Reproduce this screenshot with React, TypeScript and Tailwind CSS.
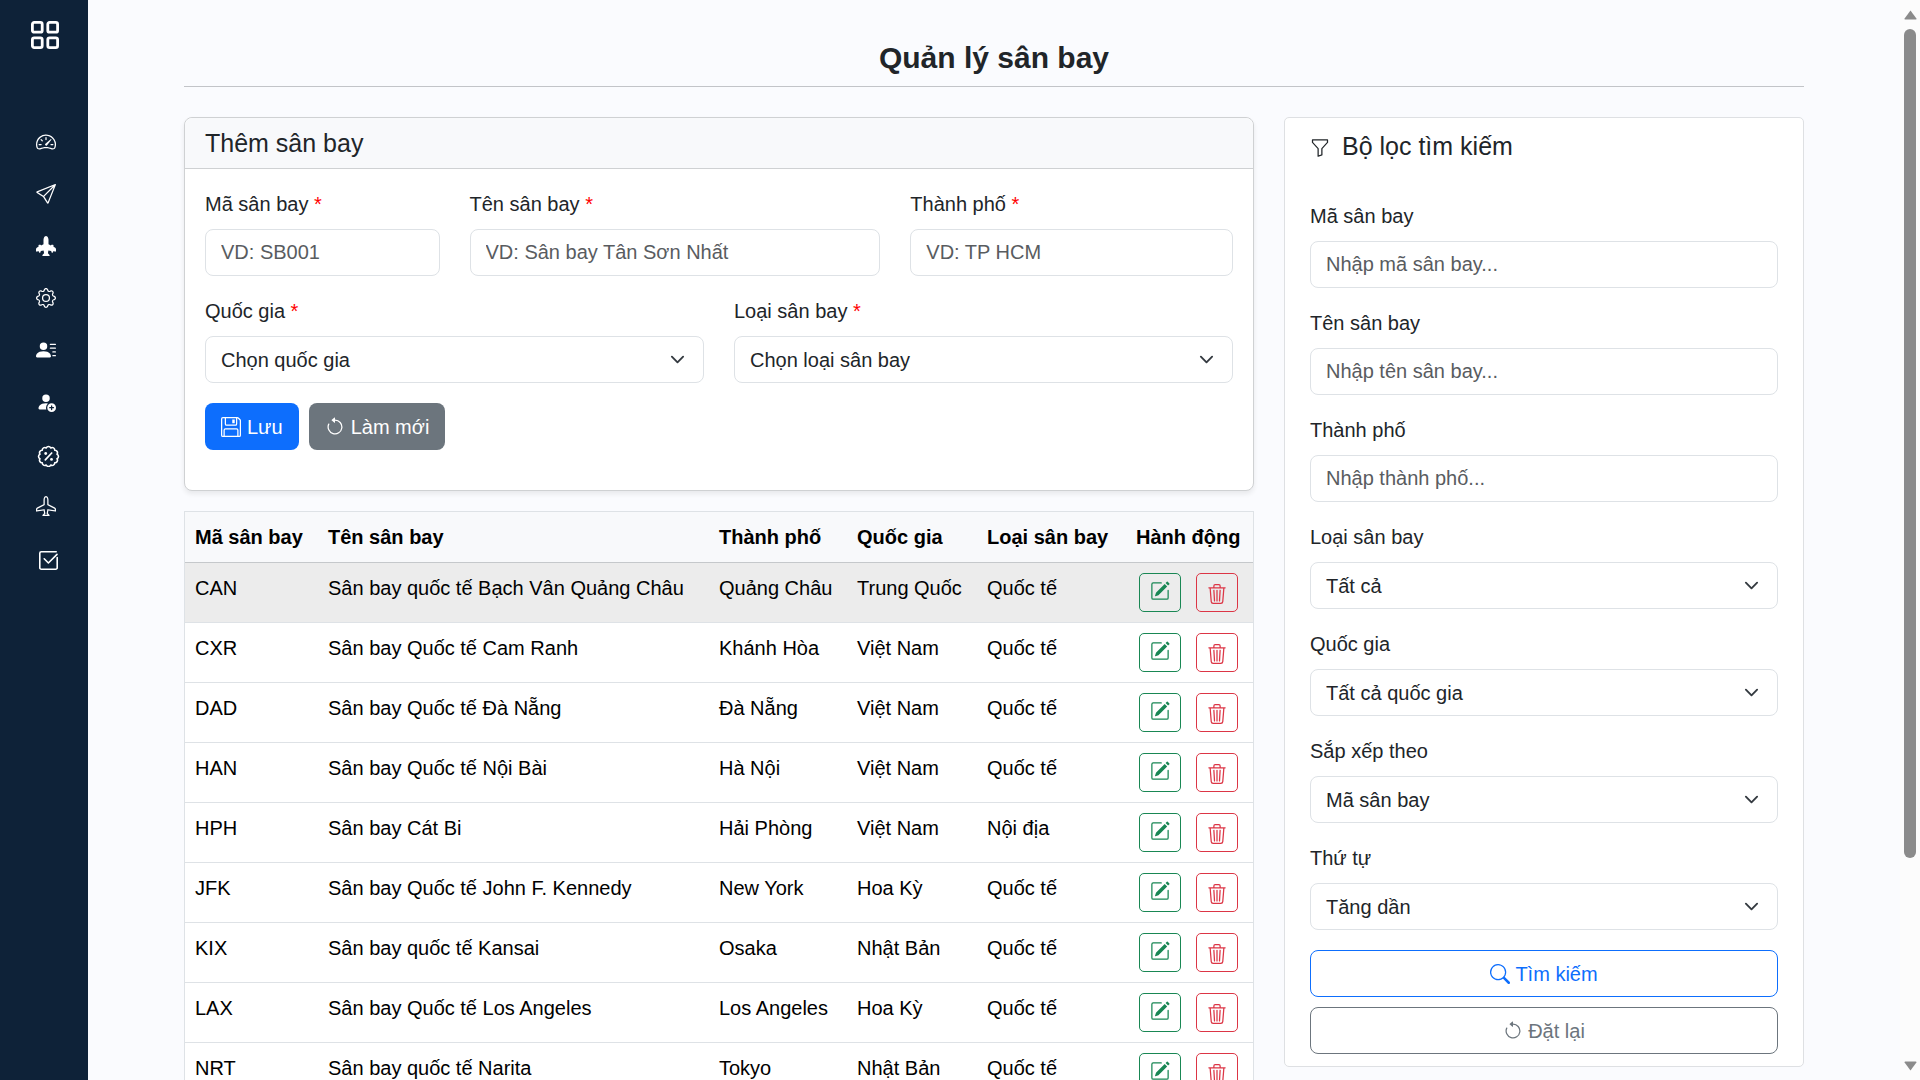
import type { ReactNode } from "react";
import type { IconType } from "react-icons";
import {
  BsAirplane,
  BsAirplaneEnginesFill,
  BsArrowCounterclockwise,
  BsFloppy,
  BsFunnel,
  BsGear,
  BsPencilSquare,
  BsPersonFillAdd,
  BsPersonLinesFill,
  BsSearch,
  BsSend,
  BsSpeedometer2,
  BsTrash3,
} from "react-icons/bs";

type Airport = { code: string; name: string; city: string; country: string; kind: string };

const airports: Airport[] = [
  { code: "CAN", name: "Sân bay quốc tế Bạch Vân Quảng Châu", city: "Quảng Châu", country: "Trung Quốc", kind: "Quốc tế" },
  { code: "CXR", name: "Sân bay Quốc tế Cam Ranh", city: "Khánh Hòa", country: "Việt Nam", kind: "Quốc tế" },
  { code: "DAD", name: "Sân bay Quốc tế Đà Nẵng", city: "Đà Nẵng", country: "Việt Nam", kind: "Quốc tế" },
  { code: "HAN", name: "Sân bay Quốc tế Nội Bài", city: "Hà Nội", country: "Việt Nam", kind: "Quốc tế" },
  { code: "HPH", name: "Sân bay Cát Bi", city: "Hải Phòng", country: "Việt Nam", kind: "Nội địa" },
  { code: "JFK", name: "Sân bay Quốc tế John F. Kennedy", city: "New York", country: "Hoa Kỳ", kind: "Quốc tế" },
  { code: "KIX", name: "Sân bay quốc tế Kansai", city: "Osaka", country: "Nhật Bản", kind: "Quốc tế" },
  { code: "LAX", name: "Sân bay Quốc tế Los Angeles", city: "Los Angeles", country: "Hoa Kỳ", kind: "Quốc tế" },
  { code: "NRT", name: "Sân bay quốc tế Narita", city: "Tokyo", country: "Nhật Bản", kind: "Quốc tế" },
];

const controlClass =
  "h-[47px] w-full rounded-lg border border-[#dee2e6] bg-white px-[15px] text-[20px] leading-[30px] text-[#212529] placeholder:text-[#595c5f] placeholder:opacity-100";

function GridIcon() {
  return (
    <svg viewBox="0 0 28 28" className="size-7" fill="none" stroke="currentColor" strokeWidth="2.8" aria-hidden="true">
      <rect x="1.4" y="1.4" width="9.8" height="9.8" rx="1.8" />
      <rect x="16.8" y="1.4" width="9.8" height="9.8" rx="1.8" />
      <rect x="1.4" y="16.8" width="9.8" height="9.8" rx="1.8" />
      <rect x="16.8" y="16.8" width="9.8" height="9.8" rx="1.8" />
    </svg>
  );
}

/* Scalloped badge outline: twelve small outward arcs around the centre. */
const scallops = Array.from({ length: 12 }, (_, i) => {
  const a = ((i + 0.5) * Math.PI) / 6;
  return `${(12.5 + 8.8 * Math.cos(a)).toFixed(2)} ${(15.5 + 8.8 * Math.sin(a)).toFixed(2)}`;
});
const badgePath = `M${scallops[11]} ${scallops.map((p) => `A2.5 2.5 0 0 1 ${p}`).join(" ")}Z`;

function DiscountIcon() {
  return (
    <svg viewBox="0 0 26 26" className="size-[26px]" fill="none" stroke="currentColor" strokeWidth="1.6" strokeLinecap="round" aria-hidden="true">
      <path d={badgePath} strokeLinejoin="round" />
      <path d="M9.3 18.8l6.4-6.8" strokeWidth="1.7" />
      <circle cx="9.7" cy="12.5" r="1.4" fill="currentColor" stroke="none" />
      <circle cx="15.5" cy="18.4" r="1.4" fill="currentColor" stroke="none" />
    </svg>
  );
}

function CheckIcon() {
  return (
    <svg viewBox="0 0 26 26" className="size-[26px]" fill="none" stroke="currentColor" strokeWidth="1.6" strokeLinecap="round" strokeLinejoin="round" aria-hidden="true">
      <path d="M20.2 6.8H5.3a1.5 1.5 0 0 0-1.5 1.5v14.4a1.5 1.5 0 0 0 1.5 1.5h14.4a1.5 1.5 0 0 0 1.5-1.5V12.5" />
      <path d="M8.2 13.8l4.2 4.2 8.6-8.6" />
    </svg>
  );
}

function Mini(Icon: IconType) {
  return <Icon className="size-5" aria-hidden="true" />;
}

const navItems: { label: string; icon: ReactNode }[] = [
  { label: "Bảng điều khiển", icon: Mini(BsSpeedometer2) },
  { label: "Chuyến bay", icon: Mini(BsSend) },
  { label: "Máy bay", icon: Mini(BsAirplaneEnginesFill) },
  { label: "Cài đặt", icon: Mini(BsGear) },
  { label: "Khách hàng", icon: Mini(BsPersonLinesFill) },
  { label: "Nhân viên", icon: Mini(BsPersonFillAdd) },
  { label: "Khuyến mãi", icon: <DiscountIcon /> },
  { label: "Sân bay", icon: Mini(BsAirplane) },
  { label: "Đặt vé", icon: <CheckIcon /> },
];

function Sidebar() {
  return (
    <aside className="flex w-[88px] shrink-0 flex-col bg-[#0e2238] text-white">
      <button type="button" aria-label="Menu" className="mt-[21px] ml-[31px] self-start">
        <GridIcon />
      </button>
      <nav className="mt-[67px] flex flex-col">
        {navItems.map((item) => (
          <a key={item.label} href="#" aria-label={item.label} className="flex h-[52px] items-center pl-9">
            {item.icon}
          </a>
        ))}
      </nav>
    </aside>
  );
}

function Field({ id, label, required, className = "", children }: { id: string; label: string; required?: boolean; className?: string; children: ReactNode }) {
  return (
    <div className={className}>
      <label htmlFor={id} className="mb-[10px] block">
        {label}
        {required && <span className="text-[#ff0000]"> *</span>}
      </label>
      {children}
    </div>
  );
}

function Select({ id, option }: { id: string; option: string }) {
  return (
    <div className="relative">
      <select id={id} className={`${controlClass} appearance-none`}>
        <option>{option}</option>
      </select>
      <svg viewBox="0 0 16 16" className="pointer-events-none absolute top-4 right-[19px] size-[15px]" fill="none" stroke="#343a40" strokeWidth="2" strokeLinecap="round" strokeLinejoin="round" aria-hidden="true">
        <path d="m2 5 6 6 6-6" />
      </svg>
    </div>
  );
}

function AddForm() {
  return (
    <form className="rounded-lg border border-[#cfd1d3] bg-white shadow-[0_3px_5px_rgba(0,0,0,0.075)]">
      <div className="rounded-t-lg border-b border-[#cfd1d3] bg-[#f8f9fb] px-5 py-[10px]">
        <h2 className="text-[25px] leading-[30px]">Thêm sân bay</h2>
      </div>
      <div className="p-5">
        <div className="grid grid-cols-12 gap-x-[30px] gap-y-5">
          <Field id="ma" label="Mã sân bay" required className="col-span-3">
            <input id="ma" placeholder="VD: SB001" className={controlClass} />
          </Field>
          <Field id="ten" label="Tên sân bay" required className="col-span-5">
            <input id="ten" placeholder="VD: Sân bay Tân Sơn Nhất" className={controlClass} />
          </Field>
          <Field id="tp" label="Thành phố" required className="col-span-4">
            <input id="tp" placeholder="VD: TP HCM" className={controlClass} />
          </Field>
          <Field id="qg" label="Quốc gia" required className="col-span-6">
            <Select id="qg" option="Chọn quốc gia" />
          </Field>
          <Field id="loai" label="Loại sân bay" required className="col-span-6">
            <Select id="loai" option="Chọn loại sân bay" />
          </Field>
        </div>
        <div className="my-5 flex gap-[10px] text-white">
          <button type="button" className="flex h-[47px] items-center gap-[6px] rounded-lg bg-[#0d6efd] px-4">
            <BsFloppy className="size-5" />
            Lưu
          </button>
          <button type="button" className="flex h-[47px] items-center gap-[6px] rounded-lg bg-[#6c757d] px-4">
            <BsArrowCounterclockwise className="size-5" />
            Làm mới
          </button>
        </div>
      </div>
    </form>
  );
}

const headings = ["Mã sân bay", "Tên sân bay", "Thành phố", "Quốc gia", "Loại sân bay", "Hành động"];

function AirportTable() {
  return (
    <table className="mt-5 w-full table-fixed border-separate border-spacing-0 border-x border-t border-[#dee2e6] bg-white text-left text-black">
      <colgroup>
        <col className="w-[133px]" />
        <col />
        <col className="w-[138px]" />
        <col className="w-[130px]" />
        <col className="w-[149px]" />
        <col className="w-[127px]" />
      </colgroup>
      <thead>
        <tr>
          {headings.map((h) => (
            <th key={h} className="border-b border-[#c5c8cb] bg-[#f8f9fb] p-[10px] font-bold whitespace-nowrap">
              {h}
            </th>
          ))}
        </tr>
      </thead>
      <tbody className="[&_td]:border-b [&_td]:border-[#dee2e6] [&_td]:p-[10px] [&_td]:align-top [&_td]:whitespace-nowrap">
        {airports.map((a, i) => (
          <tr key={a.code} className={i === 0 ? "bg-[#ececec]" : ""}>
            <td>{a.code}</td>
            <td>{a.name}</td>
            <td>{a.city}</td>
            <td>{a.country}</td>
            <td>{a.kind}</td>
            <td>
              <div className="flex gap-[15px] pl-[3px]">
                <button type="button" aria-label={`Sửa ${a.code}`} className="flex h-[39px] w-[42px] items-center justify-center rounded-[5px] border border-[#198754] pb-[3px] text-[#198754]">
                  <BsPencilSquare className="size-5" />
                </button>
                <button type="button" aria-label={`Xóa ${a.code}`} className="flex h-[39px] w-[42px] items-center justify-center rounded-[5px] border border-[#dc3545] pt-[3px] text-[#dc3545]">
                  <BsTrash3 className="size-5" />
                </button>
              </div>
            </td>
          </tr>
        ))}
      </tbody>
    </table>
  );
}

function FilterPanel() {
  return (
    <form className="rounded-[5px] border border-[#dee0e3] bg-white px-[25px] pt-[13px] pb-3">
      <h2 className="mb-10 flex items-center gap-3 text-[25px] leading-[30px]">
        <BsFunnel className="mt-1 size-5" />
        Bộ lọc tìm kiếm
      </h2>
      <div className="flex flex-col gap-5">
        <Field id="f-ma" label="Mã sân bay">
          <input id="f-ma" placeholder="Nhập mã sân bay..." className={controlClass} />
        </Field>
        <Field id="f-ten" label="Tên sân bay">
          <input id="f-ten" placeholder="Nhập tên sân bay..." className={controlClass} />
        </Field>
        <Field id="f-tp" label="Thành phố">
          <input id="f-tp" placeholder="Nhập thành phố..." className={controlClass} />
        </Field>
        <Field id="f-loai" label="Loại sân bay">
          <Select id="f-loai" option="Tất cả" />
        </Field>
        <Field id="f-qg" label="Quốc gia">
          <Select id="f-qg" option="Tất cả quốc gia" />
        </Field>
        <Field id="f-sx" label="Sắp xếp theo">
          <Select id="f-sx" option="Mã sân bay" />
        </Field>
        <Field id="f-tt" label="Thứ tự">
          <Select id="f-tt" option="Tăng dần" />
        </Field>
        <div className="flex flex-col gap-[10px]">
          <button type="button" className="flex h-[47px] items-center justify-center gap-[5px] rounded-lg border border-[#0d6efd] text-[#0d6efd]">
            <BsSearch className="size-5" />
            Tìm kiếm
          </button>
          <button type="button" className="flex h-[47px] items-center justify-center gap-[5px] rounded-lg border border-[#6c757d] text-[#6c757d]">
            <BsArrowCounterclockwise className="size-5" />
            Đặt lại
          </button>
        </div>
      </div>
    </form>
  );
}

function ScrollRail() {
  return (
    <div className="flex w-5 shrink-0 flex-col items-center bg-[#fcfcfc] pt-[10px] pb-[9px] text-[#8b8b8b]" aria-hidden="true">
      <svg viewBox="0 0 13 10" className="h-[10px] w-[13px]" fill="currentColor">
        <path d="M6.5 0.5 12.4 8.4Q12.6 9.6 11.6 9.6H1.4Q.4 9.6.6 8.4Z" />
      </svg>
      <div className="mt-[9px] flex w-3 flex-1 flex-col">
        <div className="h-[calc(80%+3px)] rounded-full bg-[#8b8b8b]" />
      </div>
      <svg viewBox="0 0 13 10" className="h-[10px] w-[13px]" fill="currentColor">
        <path d="M6.5 9.5 12.4 1.6Q12.6.4 11.6.4H1.4Q.4.4.6 1.6Z" />
      </svg>
    </div>
  );
}

export default function App() {
  return (
    <div className="flex h-screen overflow-hidden bg-[#fafbfe] font-['Liberation_Sans',Arial,sans-serif] text-[20px] leading-[30px] text-[#212529]">
      <Sidebar />
      <main className="min-w-0 flex-1 overflow-hidden">
        <div className="mx-auto max-w-[1650px] px-[15px] pt-10">
          <h1 className="border-b border-[#c2c4c8] pb-[10px] text-center text-[30px] leading-9 font-bold">Quản lý sân bay</h1>
          <div className="mt-[30px] grid grid-cols-12 items-start gap-[30px]">
            <section className="col-span-8">
              <AddForm />
              <AirportTable />
            </section>
            <aside className="col-span-4">
              <FilterPanel />
            </aside>
          </div>
        </div>
      </main>
      <ScrollRail />
    </div>
  );
}
